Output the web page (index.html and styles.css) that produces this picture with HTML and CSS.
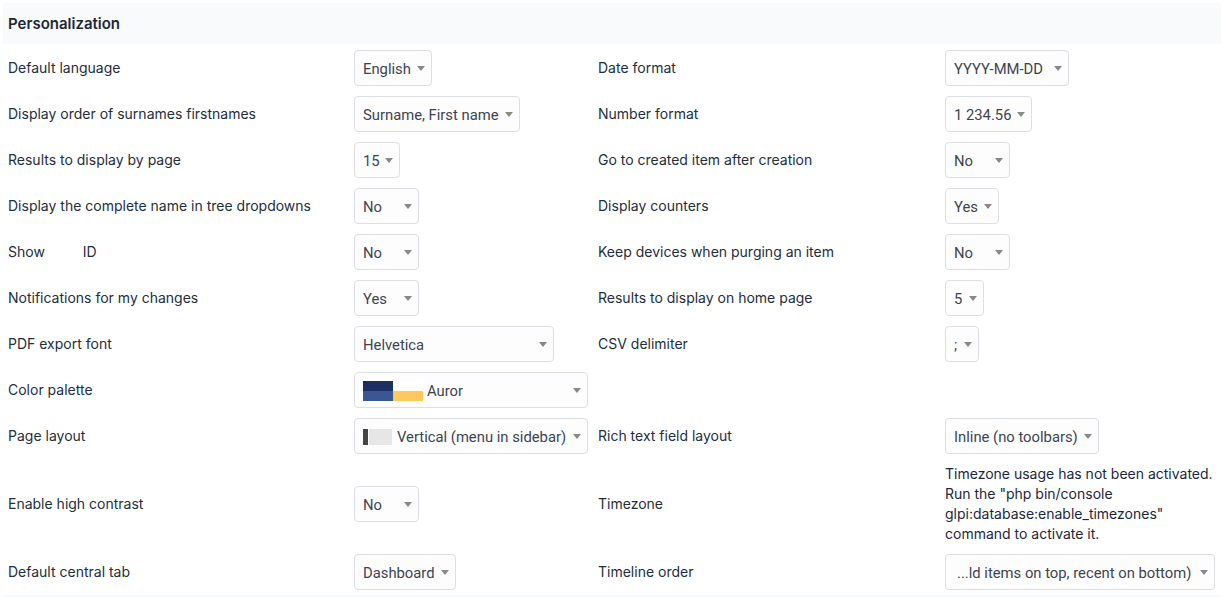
FILE: index.html
```html
<!DOCTYPE html>
<html lang="en">
<head>
<meta charset="utf-8">
<title>Personalization</title>
<link rel="stylesheet" href="styles.css">
</head>
<body>
<div class="page">
  <div class="section-head">Personalization</div>
  <div class="grid">
    <div class="lbl">Default language</div>
    <div class="cell"><div class="sel w78"><span class="txt">English</span><span class="arr"></span></div></div>
    <div class="lbl">Date format</div>
    <div class="cell"><div class="sel w124"><span class="txt">YYYY-MM-DD</span><span class="arr"></span></div></div>

    <div class="lbl">Display order of surnames firstnames</div>
    <div class="cell"><div class="sel w166"><span class="txt">Surname, First name</span><span class="arr"></span></div></div>
    <div class="lbl">Number format</div>
    <div class="cell"><div class="sel w87"><span class="txt">1 234.56</span><span class="arr"></span></div></div>

    <div class="lbl">Results to display by page</div>
    <div class="cell"><div class="sel w46"><span class="txt">15</span><span class="arr"></span></div></div>
    <div class="lbl">Go to created item after creation</div>
    <div class="cell"><div class="sel w65"><span class="txt">No</span><span class="arr"></span></div></div>

    <div class="lbl">Display the complete name in tree dropdowns</div>
    <div class="cell"><div class="sel w65"><span class="txt">No</span><span class="arr"></span></div></div>
    <div class="lbl">Display counters</div>
    <div class="cell"><div class="sel w54"><span class="txt">Yes</span><span class="arr"></span></div></div>

    <div class="lbl">Show <span class="gap"></span>ID</div>
    <div class="cell"><div class="sel w65"><span class="txt">No</span><span class="arr"></span></div></div>
    <div class="lbl">Keep devices when purging an item</div>
    <div class="cell"><div class="sel w65"><span class="txt">No</span><span class="arr"></span></div></div>

    <div class="lbl">Notifications for my changes</div>
    <div class="cell"><div class="sel w65"><span class="txt">Yes</span><span class="arr"></span></div></div>
    <div class="lbl">Results to display on home page</div>
    <div class="cell"><div class="sel w39"><span class="txt">5</span><span class="arr"></span></div></div>

    <div class="lbl">PDF export font</div>
    <div class="cell"><div class="sel w200"><span class="txt">Helvetica</span><span class="arr"></span></div></div>
    <div class="lbl">CSV delimiter</div>
    <div class="cell"><div class="sel w34"><span class="txt">;</span><span class="arr"></span></div></div>

    <div class="lbl">Color palette</div>
    <div class="cell"><div class="sel w234"><span class="palette"><i class="p1"></i><i class="p2"></i><i class="p3"></i><i class="p4"></i></span><span class="txt">Auror</span><span class="arr"></span></div></div>
    <div class="lbl"></div>
    <div class="cell"></div>

    <div class="lbl">Page layout</div>
    <div class="cell"><div class="sel w234"><span class="layout"><i class="lb"></i><i class="lm"></i></span><span class="txt">Vertical (menu in sidebar)</span><span class="arr"></span></div></div>
    <div class="lbl">Rich text field layout</div>
    <div class="cell"><div class="sel w154"><span class="txt">Inline (no toolbars)</span><span class="arr"></span></div></div>

    <div class="lbl">Enable high contrast</div>
    <div class="cell"><div class="sel w65"><span class="txt">No</span><span class="arr"></span></div></div>
    <div class="lbl">Timezone</div>
    <div class="cell"><div class="note">Timezone usage has not been activated. Run the "php bin/console glpi:database:enable_timezones" command to activate it.</div></div>

    <div class="lbl">Default central tab</div>
    <div class="cell"><div class="sel w102"><span class="txt">Dashboard</span><span class="arr"></span></div></div>
    <div class="lbl">Timeline order</div>
    <div class="cell"><div class="sel w270 trunc"><span class="txt">...ld items on top, recent on bottom)</span><span class="arr"></span></div></div>
  </div>
  <div class="section-head next"></div>
</div>
</body>
</html>
```

FILE: styles.css
```css
html, body {
  margin: 0;
  padding: 0;
  background: #ffffff;
}

body {
  font-family: Inter, "Noto Sans", sans-serif;
  font-size: 14px;
  color: #1d273b;
}

.page {
  padding: 3px 3px 0 3px;
}

.section-head {
  height: 41px;
  display: flex;
  align-items: center;
  padding-left: 5px;
  background: #f9fafc;
  font-weight: 600;
  font-size: 15px;
  color: #1d273b;
}

.section-head.next {
  height: 10px;
}

.grid {
  display: grid;
  grid-template-columns: 346px 244px 347px 1fr;
  padding-top: 1px;
}

.lbl, .cell {
  display: flex;
  align-items: center;
  padding: 5px 5px;
  min-height: 36px;
}

.lbl {
  line-height: 20px;
  color: #232e3c;
}

.gap {
  display: inline-block;
  width: 38px;
}

.sel {
  box-sizing: border-box;
  height: 36px;
  display: flex;
  align-items: center;
  border: 1px solid #dcdfe3;
  border-radius: 4px;
  background: #fdfdfd;
  padding-left: 8px;
  padding-top: 1px;
  font-family: Roboto, "Liberation Sans", sans-serif;
  font-size: 14.8px;
  color: #3d4450;
  white-space: nowrap;
  overflow: hidden;
}

.sel .txt {
  flex: 0 1 auto;
  overflow: hidden;
}

.sel.trunc {
  padding-left: 11px;
}

.arr {
  margin-left: auto;
  margin-right: 6px;
  flex: none;
  width: 0;
  height: 0;
  border-style: solid;
  border-width: 5px 4px 0 4px;
  border-color: #888888 transparent transparent transparent;
}

.w34 { width: 34px; }
.w39 { width: 39px; }
.w46 { width: 46px; }
.w54 { width: 54px; }
.w65 { width: 65px; }
.w78 { width: 78px; }
.w87 { width: 87px; }
.w102 { width: 102px; }
.w124 { width: 124px; }
.w154 { width: 154px; }
.w166 { width: 166px; }
.w200 { width: 200px; }
.w234 { width: 234px; }
.w270 { width: 270px; }

.palette {
  display: grid;
  grid-template-columns: 30px 30px;
  grid-template-rows: 10px 10px;
  margin-right: 4px;
  flex: none;
}

.palette i {
  display: block;
}

.p1 { background: #1d2f61; }
.p2 { background: #ffffff; }
.p3 { background: #3a5794; }
.p4 { background: #fec95c; }

.layout {
  display: flex;
  height: 16px;
  margin-right: 5px;
  flex: none;
}

.layout .lb {
  display: block;
  width: 5px;
  background: #454545;
  margin-right: 1px;
}

.layout .lm {
  display: block;
  width: 23px;
  background: #e6e6e6;
}

.note {
  line-height: 20px;
  color: #1d273b;
}
```
